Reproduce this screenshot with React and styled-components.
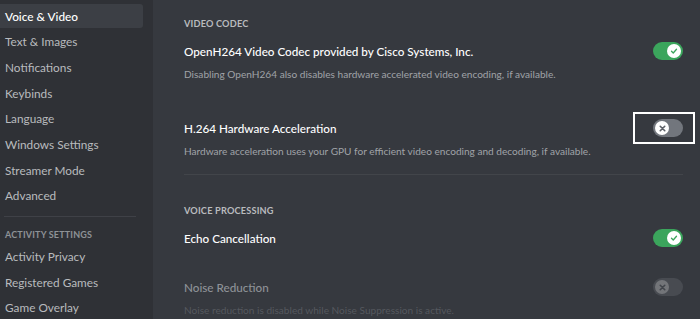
import React from "react";
import styled, { createGlobalStyle } from "styled-components";

const Global = createGlobalStyle`
  html, body { margin: 0; padding: 0; background: #36393f; }
  body { font-family: "Lato", "Noto Sans", sans-serif; -webkit-font-smoothing: antialiased; }
  * { box-sizing: border-box; }
`;

const Layout = styled.div`
  display: flex;
  width: 700px;
  height: 319px;
  overflow: hidden;
`;

const Sidebar = styled.nav`
  width: 153px;
  flex: none;
  background: #2f3136;
  padding: 4px 10px 0 0;
  display: flex;
  flex-direction: column;
  gap: 1.7px;
`;

const NavItem = styled.div`
  height: 24px;
  flex: none;
  display: flex;
  align-items: center;
  padding-left: 5px;
  border-radius: 0 3px 3px 0;
  font-size: 11.8px;
  font-weight: ${(p) => (p.$active ? 500 : 400)};
  color: ${(p) => (p.$active ? "#ffffff" : "#b9bbbe")};
  background: ${(p) => (p.$active ? "#3c3f45" : "transparent")};
`;

const NavDivider = styled.div`
  height: 1px;
  margin: 6.5px 7px 10px 4px;
  background: #3f4147;
  flex: none;
`;

const NavHeader = styled.div`
  height: 12px;
  flex: none;
  padding-left: 5px;
  font-size: 9px;
  font-weight: 700;
  letter-spacing: 0.02em;
  text-transform: uppercase;
  color: #8e9297;
  line-height: 12px;
  margin-bottom: 2px;
`;

const Main = styled.main`
  flex: 1;
  padding: 18px 17px 0 31px;
  display: flex;
  flex-direction: column;
`;

const SectionHeader = styled.h2`
  margin: 0 0 13px;
  font-size: 9.2px;
  line-height: 12px;
  font-weight: 700;
  letter-spacing: 0.02em;
  text-transform: uppercase;
  color: #b9bbbe;
`;

const Setting = styled.div`
  display: flex;
  flex-direction: column;
  margin-bottom: ${(p) => p.$mb || 0}px;
`;

const SettingRow = styled.div`
  display: flex;
  align-items: center;
  justify-content: space-between;
  height: 16px;
`;

const Title = styled.div`
  font-size: 11.7px;
  font-weight: 500;
  line-height: 16px;
  color: ${(p) => (p.$disabled ? "#8e9297" : "#ffffff")};
`;

const Description = styled.div`
  margin-top: 7px;
  font-size: 10.1px;
  line-height: 16px;
  color: ${(p) => (p.$disabled ? "#55585e" : "#a0a3a8")};
`;

const Divider = styled.div`
  height: 1px;
  background: #42454a;
  margin: 15px 0 30px;
`;

const ToggleWrap = styled.div`
  position: relative;
  width: 30px;
  height: 18px;
  flex: none;
  opacity: ${(p) => (p.$disabled ? 0.3 : 1)};
`;

const Track = styled.div`
  width: 30px;
  height: 18px;
  border-radius: 9px;
  background: ${(p) => (p.$on ? "#3ba55c" : "#72767d")};
  display: flex;
  align-items: center;
  justify-content: ${(p) => (p.$on ? "flex-end" : "flex-start")};
  padding: 0 2px;
`;

const Knob = styled.div`
  width: 14px;
  height: 14px;
  border-radius: 50%;
  background: #ffffff;
  display: flex;
  align-items: center;
  justify-content: center;
`;

const Highlight = styled.div`
  position: absolute;
  top: -7px;
  bottom: -7px;
  left: -20px;
  right: -12px;
  border: 2px solid #ffffff;
  pointer-events: none;
`;

function Toggle({ on, disabled, highlighted }) {
  return (
    <ToggleWrap $disabled={disabled}>
      <Track $on={on}>
        <Knob>
          {on ? (
            <svg width="10" height="10" viewBox="0 0 20 20">
              <path
                d="M5 10.5 L8.5 14 L15 6.5"
                fill="none"
                stroke="#3ba55c"
                strokeWidth="2.6"
                strokeLinecap="round"
                strokeLinejoin="round"
              />
            </svg>
          ) : (
            <svg width="9" height="9" viewBox="0 0 20 20">
              <path
                d="M5 5 L15 15 M15 5 L5 15"
                fill="none"
                stroke="#5d6168"
                strokeWidth="3.6"
                strokeLinecap="round"
              />
            </svg>
          )}
        </Knob>
      </Track>
      {highlighted && <Highlight />}
    </ToggleWrap>
  );
}

const navTop = [
  "Voice & Video",
  "Text & Images",
  "Notifications",
  "Keybinds",
  "Language",
  "Windows Settings",
  "Streamer Mode",
  "Advanced",
];
const navBottom = ["Activity Privacy", "Registered Games", "Game Overlay"];

export default function App() {
  return (
    <>
      <Global />
      <Layout>
        <Sidebar>
          {navTop.map((n, i) => (
            <NavItem key={n} $active={i === 0}>
              {n}
            </NavItem>
          ))}
          <NavDivider />
          <NavHeader>Activity Settings</NavHeader>
          {navBottom.map((n) => (
            <NavItem key={n}>{n}</NavItem>
          ))}
        </Sidebar>
        <Main>
          <SectionHeader>Video Codec</SectionHeader>
          <Setting $mb={38}>
            <SettingRow>
              <Title>OpenH264 Video Codec provided by Cisco Systems, Inc.</Title>
              <Toggle on />
            </SettingRow>
            <Description>
              Disabling OpenH264 also disables hardware accelerated video encoding, if available.
            </Description>
          </Setting>
          <Setting>
            <SettingRow>
              <Title>H.264 Hardware Acceleration</Title>
              <Toggle highlighted />
            </SettingRow>
            <Description>
              Hardware acceleration uses your GPU for efficient video encoding and decoding, if available.
            </Description>
          </Setting>
          <Divider />
          <SectionHeader>Voice Processing</SectionHeader>
          <Setting $mb={33}>
            <SettingRow>
              <Title>Echo Cancellation</Title>
              <Toggle on />
            </SettingRow>
          </Setting>
          <Setting>
            <SettingRow>
              <Title $disabled>Noise Reduction</Title>
              <Toggle disabled />
            </SettingRow>
            <Description $disabled>
              Noise reduction is disabled while Noise Suppression is active.
            </Description>
          </Setting>
        </Main>
      </Layout>
    </>
  );
}
